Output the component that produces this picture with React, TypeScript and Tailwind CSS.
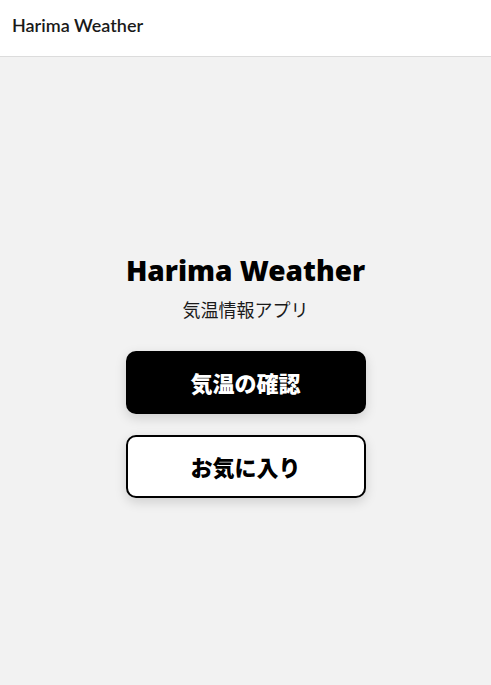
export default function App() {
  return (
    <div className="flex min-h-[685px] flex-col bg-[#f2f2f2] font-['Lato','Noto_Sans_CJK_JP',sans-serif]">
      <header className="flex h-[57px] items-center border-b border-[#dcdcdc] bg-white px-3 pb-[6px]">
        <h1 className="text-[18px] font-semibold text-[#1a1a1a]">Harima Weather</h1>
      </header>

      <main className="flex flex-1 flex-col items-center justify-center pt-[9px]">
        <h2 className="font-['Noto_Sans','Lato',sans-serif] text-[28px] font-black leading-tight text-black">
          Harima Weather
        </h2>
        <p className="mt-[9px] text-[18px] text-[#1a1a1a]">気温情報アプリ</p>

        <div className="mt-[27px] flex flex-col gap-[21px]">
          <button
            type="button"
            className="h-[63px] w-[240px] rounded-[10px] bg-black font-['Noto_Sans_CJK_JP',sans-serif] text-[22px] font-black text-white shadow-[0_4px_12px_rgba(0,0,0,0.15)]"
          >
            気温の確認
          </button>
          <button
            type="button"
            className="h-[63px] w-[240px] rounded-[10px] border-2 border-black bg-white font-['Noto_Sans_CJK_JP',sans-serif] text-[22px] font-black text-black shadow-[0_4px_12px_rgba(0,0,0,0.15)]"
          >
            お気に入り
          </button>
        </div>
      </main>
    </div>
  );
}
